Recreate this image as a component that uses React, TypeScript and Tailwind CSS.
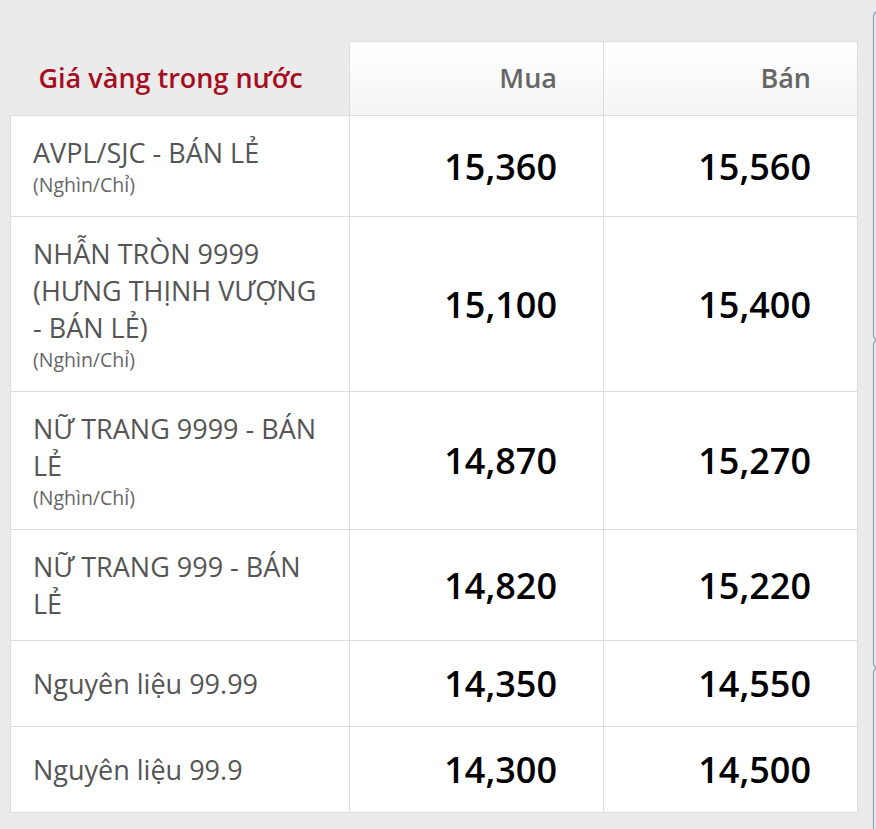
import React from "react";

type Row = { lines: string[]; unit?: boolean; buy: string; sell: string };

const rows: Row[] = [
  { lines: ["AVPL/SJC - BÁN LẺ"], unit: true, buy: "15,360", sell: "15,560" },
  { lines: ["NHẪN TRÒN 9999", "(HƯNG THỊNH VƯỢNG", "- BÁN LẺ)"], unit: true, buy: "15,100", sell: "15,400" },
  { lines: ["NỮ TRANG 9999 - BÁN", "LẺ"], unit: true, buy: "14,870", sell: "15,270" },
  { lines: ["NỮ TRANG 999 - BÁN", "LẺ"], buy: "14,820", sell: "15,220" },
  { lines: ["Nguyên liệu 99.99"], buy: "14,350", sell: "14,550" },
  { lines: ["Nguyên liệu 99.9"], buy: "14,300", sell: "14,500" },
];

export default function App() {
  return (
    <div
      className="relative w-[876px] h-[829px] overflow-hidden bg-[#ebebeb] pt-[41px] pl-[10px]"
      style={{ fontFamily: '"Open Sans", "Noto Sans", sans-serif' }}
    >
      <table className="table-fixed border-collapse w-[848px]">
        <colgroup>
          <col className="w-[339px]" />
          <col className="w-[254px]" />
          <col className="w-[254px]" />
        </colgroup>
        <thead>
          <tr className="h-[74px]">
            <th className="text-left align-middle pl-[28px] font-semibold text-[27px] text-[#a50d22] whitespace-nowrap">
              Giá vàng trong nước
            </th>
            <th className="text-right align-middle pr-[46px] font-semibold text-[27px] text-[#666666] border border-[#dddddd] bg-linear-to-b from-white to-[#f4f4f4]">
              Mua
            </th>
            <th className="text-right align-middle pr-[46px] font-semibold text-[27px] text-[#666666] border border-[#dddddd] bg-linear-to-b from-white to-[#f4f4f4]">
              Bán
            </th>
          </tr>
        </thead>
        <tbody>
          {rows.map((r, i) => (
            <tr key={i}>
              <td className="bg-white border border-[#dddddd] align-middle pl-[22px] pr-[10px] py-[18px] text-[#555555]">
                {r.lines.map((l, j) => (
                  <div key={j} className="text-[27px] leading-[37px] whitespace-nowrap">
                    {l}
                  </div>
                ))}
                {r.unit && (
                  <div className="text-[19.5px] leading-[27px] text-[#666666]">(Nghìn/Chỉ)</div>
                )}
              </td>
              <td className="bg-white border border-[#dddddd] align-middle text-right pr-[46px] py-[18px] text-[36px] leading-[49px] font-semibold text-black">
                {r.buy}
              </td>
              <td className="bg-white border border-[#dddddd] align-middle text-right pr-[46px] py-[18px] text-[36px] leading-[49px] font-semibold text-black">
                {r.sell}
              </td>
            </tr>
          ))}
        </tbody>
      </table>
      <svg
        className="absolute left-0 top-0 pointer-events-none"
        width="876"
        height="829"
        viewBox="0 0 876 829"
      >
        <path
          d="M873.5 829 V672 L875.5 668 L873.5 664 V344 L875.5 340 L873.5 336 V17 Q873.5 13 876 12"
          fill="none"
          stroke="#8a9cbf"
          strokeWidth="1.2"
        />
      </svg>
    </div>
  );
}
